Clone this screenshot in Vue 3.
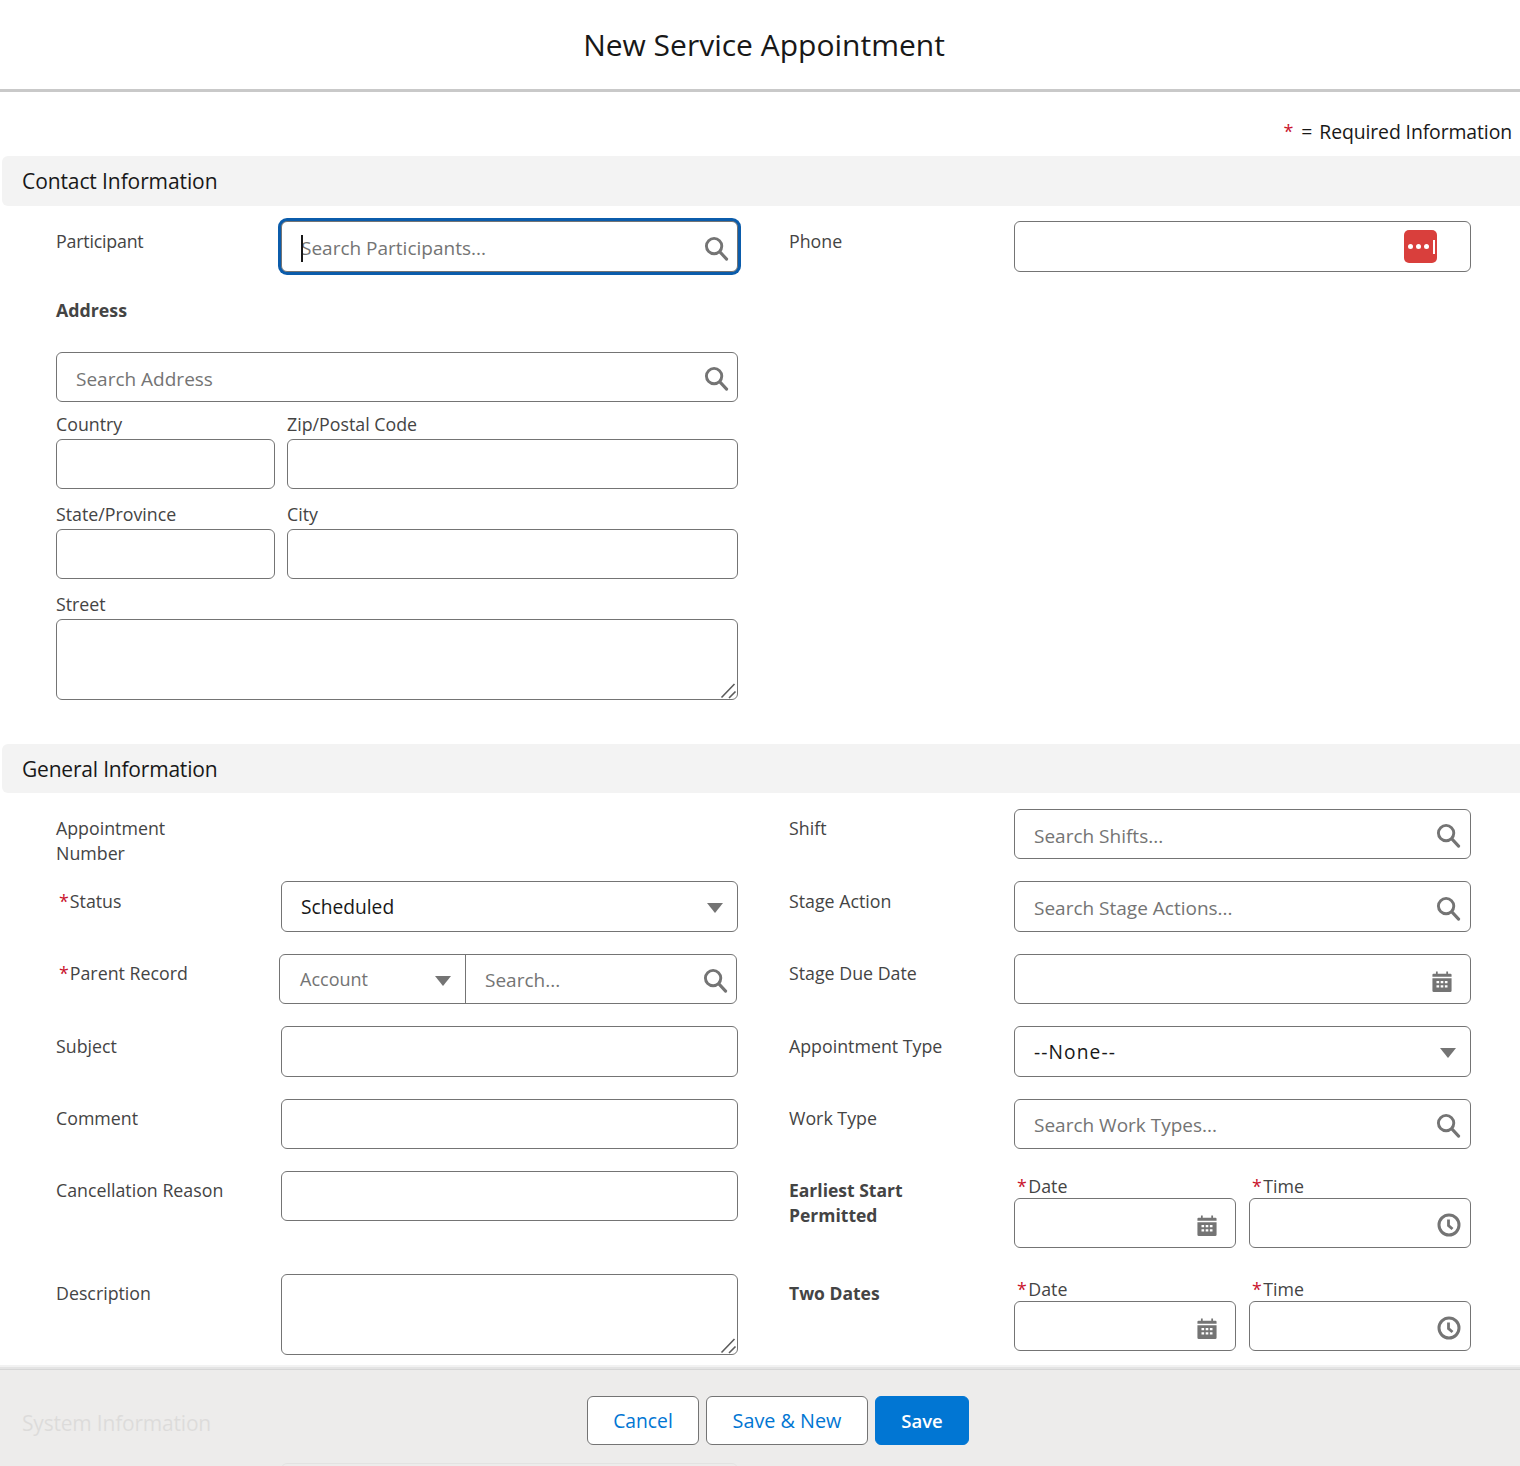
<template>
  <div class="page">
    <svg class="defs" width="0" height="0">
      <symbol id="i-search" viewBox="0 0 26 26">
        <circle cx="10.5" cy="10.5" r="8" fill="none" stroke="#747474" stroke-width="3" />
        <path d="M16.5 16.5 L23.5 24" fill="none" stroke="#747474" stroke-width="3.2" stroke-linecap="round" />
      </symbol>
      <symbol id="i-cal" viewBox="0 0 20 20">
        <path fill="#747474" fill-rule="evenodd" d="M4.5 0.5h1.6v2h7.8v-2h1.6v2h2.2a1 1 0 0 1 1 1v1.7H1.3V3.5a1 1 0 0 1 1-1h2.2zM1.3 6.6h17.4v11.4a1.2 1.2 0 0 1-1.2 1.2H2.5a1.2 1.2 0 0 1-1.2-1.2zM5 9.2v2h2.4v-2zM8.8 9.2v2h2.4v-2zM12.6 9.2v2H15v-2zM5 13v2h2.4v-2zM8.8 13v2h2.4v-2zM12.6 13v2H15v-2z" />
      </symbol>
      <symbol id="i-clock" viewBox="0 0 24 24">
        <circle cx="12" cy="12" r="10" fill="none" stroke="#747474" stroke-width="3" />
        <path d="M11.5 6.5 V12.5 L15.5 16" fill="none" stroke="#747474" stroke-width="2.8" />
      </symbol>
      <symbol id="i-grip" viewBox="0 0 18 16">
        <path d="M1.5 14.5 L14.5 1 M9 15 L15.5 8.5" fill="none" stroke="#5c5c5c" stroke-width="1.6" />
      </symbol>
    </svg>

    <header class="top">
      <h1>New Service Appointment</h1>
    </header>

    <p class="required"><span class="star">*</span><span class="eq">=</span>Required Information</p>

    <section>
      <h2 class="bar contact-bar">Contact Information</h2>
      <div class="grid contact-top">
        <div class="row">
          <label class="tight">Participant</label>
          <div class="box focus">
            <input placeholder="Search Participants..." />
            <i class="caret"></i>
            <svg class="ic search left-ic"><use href="#i-search" /></svg>
          </div>
        </div>
        <div class="row">
          <label>Phone</label>
          <div class="box">
            <input />
            <span class="lastpass"><b></b><b></b><b></b><em></em></span>
          </div>
        </div>
      </div>

      <div class="address">
        <h3>Address</h3>
        <div class="box h50">
          <input class="low" placeholder="Search Address" />
          <svg class="ic search left-ic"><use href="#i-search" /></svg>
        </div>
        <div class="addr-grid">
          <div class="addr-field">
            <label>Country</label>
            <div class="box h50"><input /></div>
          </div>
          <div class="addr-field">
            <label>Zip/Postal Code</label>
            <div class="box h50"><input /></div>
          </div>
          <div class="addr-field">
            <label>State/Province</label>
            <div class="box h50"><input /></div>
          </div>
          <div class="addr-field">
            <label>City</label>
            <div class="box h50"><input /></div>
          </div>
          <div class="addr-field wide">
            <label>Street</label>
            <div class="area-wrap">
              <textarea class="area"></textarea>
              <svg class="grip"><use href="#i-grip" /></svg>
            </div>
          </div>
        </div>
      </div>
    </section>

    <section class="general">
      <h2 class="bar general-bar">General Information</h2>
      <div class="grid general-grid">
        <div class="row"><label>Appointment<br />Number</label></div>
        <div class="row">
          <label>Shift</label>
          <div class="box"><input class="low" placeholder="Search Shifts..." /><svg class="ic search"><use href="#i-search" /></svg></div>
        </div>

        <div class="row tall">
          <label><span class="req">*</span>Status</label>
          <div class="box picker"><span class="val">Scheduled</span><i class="arrow"></i></div>
        </div>
        <div class="row tall">
          <label>Stage Action</label>
          <div class="box"><input placeholder="Search Stage Actions..." /><svg class="ic search"><use href="#i-search" /></svg></div>
        </div>

        <div class="row">
          <label><span class="req">*</span>Parent Record</label>
          <div class="box parent">
            <div class="parent-type"><span>Account</span><i class="arrow"></i></div>
            <div class="parent-search">
              <input placeholder="Search..." />
              <svg class="ic search left-ic"><use href="#i-search" /></svg>
            </div>
          </div>
        </div>
        <div class="row">
          <label>Stage Due Date</label>
          <div class="box"><input /><svg class="ic cal"><use href="#i-cal" /></svg></div>
        </div>

        <div class="row tall">
          <label>Subject</label>
          <div class="box"><input /></div>
        </div>
        <div class="row tall">
          <label>Appointment Type</label>
          <div class="box picker"><span class="val dashes">--None--</span><i class="arrow"></i></div>
        </div>

        <div class="row">
          <label>Comment</label>
          <div class="box"><input /></div>
        </div>
        <div class="row">
          <label>Work Type</label>
          <div class="box"><input placeholder="Search Work Types..." /><svg class="ic search"><use href="#i-search" /></svg></div>
        </div>

        <div class="row">
          <label>Cancellation Reason</label>
          <div class="box h50"><input /></div>
        </div>
        <div class="row">
          <label class="strong">Earliest Start<br />Permitted</label>
          <div class="datetime">
            <div class="dt">
              <span class="dt-label"><span class="req">*</span>Date</span>
              <div class="box h50"><input /><svg class="ic cal"><use href="#i-cal" /></svg></div>
            </div>
            <div class="dt">
              <span class="dt-label"><span class="req">*</span>Time</span>
              <div class="box h50"><input /><svg class="ic clock"><use href="#i-clock" /></svg></div>
            </div>
          </div>
        </div>

        <div class="row">
          <label>Description</label>
          <div class="area-wrap">
            <textarea class="area"></textarea>
            <svg class="grip"><use href="#i-grip" /></svg>
          </div>
        </div>
        <div class="row">
          <label class="strong">Two Dates</label>
          <div class="datetime">
            <div class="dt">
              <span class="dt-label"><span class="req">*</span>Date</span>
              <div class="box h50"><input /><svg class="ic cal"><use href="#i-cal" /></svg></div>
            </div>
            <div class="dt">
              <span class="dt-label"><span class="req">*</span>Time</span>
              <div class="box h50"><input /><svg class="ic clock"><use href="#i-clock" /></svg></div>
            </div>
          </div>
        </div>
      </div>
    </section>

    <section class="system">
      <h2 class="bar">System Information</h2>
      <div class="grid">
        <div class="row">
          <label></label>
          <div class="box"></div>
        </div>
      </div>
    </section>

    <footer class="foot">
      <button class="btn">Cancel</button>
      <button class="btn new">Save &amp; New</button>
      <button class="btn brand">Save</button>
    </footer>
  </div>
</template>

<script setup>
</script>

<style>
body {
  margin: 0;
  background: #fff;
  font-family: "Open Sans", "Noto Sans", sans-serif;
}
</style>

<style scoped>
.page {
  position: relative;
  width: 1520px;
  height: 1466px;
  overflow: hidden;
  color: #181818;
  font-size: 17.8px;
}

.defs {
  position: absolute;
}

.top {
  height: 89px;
  border-bottom: 3px solid #c9c9c9;
  display: flex;
  align-items: center;
  justify-content: center;
  padding-left: 8px;
  box-sizing: content-box;
}

h1 {
  margin: 0;
  font-size: 30px;
  font-weight: 400;
}

.required {
  margin: 0;
  height: 64px;
  box-sizing: border-box;
  padding: 14px 8px 0 0;
  display: flex;
  justify-content: flex-end;
  align-items: center;
  font-size: 19.4px;
  letter-spacing: -0.1px;
}

.star {
  color: #c9142d;
  margin-right: 8px;
  font-size: 18px;
}

.eq {
  margin-right: 7px;
}

.bar {
  margin: 0 0 0 2px;
  height: 50px;
  padding-left: 20px;
  display: flex;
  align-items: center;
  background: #f3f3f3;
  border-radius: 6px 0 0 6px;
  font-size: 21px;
  font-weight: 400;
  letter-spacing: -0.2px;
}

.contact-bar {
  letter-spacing: -0.1px;
}

.general-bar {
  height: 49px;
}

.grid {
  display: grid;
  grid-template-columns: 682px 682px;
  column-gap: 51px;
  padding-left: 56px;
}

.contact-top {
  padding-top: 15px;
  grid-template-rows: 51px;
}

.row {
  display: grid;
  grid-template-columns: 225px 457px;
  align-items: start;
}

.row label {
  padding-top: 8px;
  line-height: 25px;
  color: #444;
  white-space: nowrap;
}

.row label.tight {
  letter-spacing: -0.2px;
}

.general-grid .row label {
  padding-top: 7px;
}

.general-grid .row.tall label {
  padding-top: 8px;
}

.row label.strong {
  font-weight: 700;
  font-size: 17.5px;
}

.req {
  color: #c9142d;
  margin: 0 1px 0 3px;
}

.box {
  position: relative;
  box-sizing: border-box;
  height: 100%;
  border: 1px solid #747474;
  border-radius: 6px;
  background: #fff;
  display: flex;
  align-items: center;
}

.h50 {
  height: 50px;
}

.box input {
  width: 100%;
  height: 100%;
  box-sizing: border-box;
  border: 0;
  outline: 0;
  background: transparent;
  padding: 2px 60px 0 19px;
  font: inherit;
  font-size: 19px;
  color: #181818;
  border-radius: 6px;
}

.box input.low {
  padding-top: 4px;
}

.box input::placeholder {
  color: #747474;
  opacity: 1;
}

.focus {
  box-shadow: 0 0 0 3px #0b5cab;
}

.caret {
  position: absolute;
  left: 19px;
  top: 13px;
  width: 2px;
  height: 27px;
  background: #181818;
}

.ic {
  position: absolute;
}

.search {
  right: 9px;
  top: 50%;
  width: 25px;
  height: 25px;
  margin-top: -11px;
}

.left-ic {
  right: 8px;
}

.cal {
  right: 17px;
  top: 50%;
  width: 22px;
  height: 22px;
  margin-top: -8px;
}

.clock {
  right: 9px;
  top: 50%;
  width: 24px;
  height: 24px;
  margin-top: -10px;
}

.lastpass {
  position: absolute;
  right: 33px;
  top: 8px;
  width: 33px;
  height: 33px;
  box-sizing: border-box;
  padding-left: 4px;
  background: #d93f3c;
  border-radius: 5px;
  display: flex;
  align-items: center;
  gap: 3px;
}

.lastpass b {
  width: 5px;
  height: 5px;
  border-radius: 50%;
  background: #fff;
}

.lastpass em {
  width: 1.5px;
  height: 14px;
  background: #fff;
  margin-left: 1px;
}

.address {
  width: 682px;
  margin-left: 56px;
}

h3 {
  margin: 0;
  padding-top: 26px;
  height: 54px;
  line-height: 25px;
  font-size: 17.8px;
  font-weight: 700;
  color: #444;
}

.addr-grid {
  display: grid;
  grid-template-columns: 219px 451px;
  column-gap: 12px;
  row-gap: 0;
}

.addr-field {
  display: flex;
  flex-direction: column;
  padding-top: 10px;
  height: 77px;
  margin-bottom: 3px;
}

.addr-field label {
  height: 27px;
  line-height: 25px;
  color: #444;
}

.addr-field.wide {
  grid-column: 1 / 3;
  height: 108px;
  margin-bottom: 0;
}

.area-wrap {
  position: relative;
  height: 81px;
}

.area {
  display: block;
  box-sizing: border-box;
  width: 100%;
  height: 81px;
  border: 1px solid #747474;
  border-radius: 6px;
  outline: 0;
  background: #fff;
  resize: none;
  padding: 8px 19px;
  font: inherit;
}

.grip {
  position: absolute;
  right: 0;
  bottom: 1px;
  width: 18px;
  height: 16px;
}

.general {
  margin-top: 44px;
}

.general-grid {
  padding-top: 16px;
  grid-template-rows: 50px 51px 50px 51px 50px 81px 81px;
  row-gap: 22px;
}

.general-grid > .row {
  height: 100%;
}

.picker {
  padding-left: 19px;
  color: #181818;
  font-size: 19.2px;
}

.dashes {
  letter-spacing: 1.1px;
}

.arrow {
  position: absolute;
  right: 14px;
  top: 50%;
  margin-top: -4px;
  width: 0;
  height: 0;
  border-left: 8.5px solid transparent;
  border-right: 8.5px solid transparent;
  border-top: 10px solid #747474;
}

.parent {
  margin-left: -2px;
  width: 458px;
}

.parent-type {
  position: relative;
  width: 186px;
  height: 100%;
  box-sizing: border-box;
  padding-left: 20px;
  border-right: 1px solid #747474;
  display: flex;
  align-items: center;
  color: #747474;
  font-size: 18px;
}

.parent-type .arrow {
  margin-top: -3px;
}

.parent-search {
  position: relative;
  flex: 1;
  height: 100%;
}

.datetime {
  display: grid;
  grid-template-columns: 222px 222px;
  column-gap: 13px;
}

.dt-label {
  display: block;
  height: 27px;
  line-height: 30px;
  color: #444;
}

.dt-label .req {
  margin-right: 1.5px;
}

.system {
  margin-top: 43px;
}

.system .grid {
  padding-top: 15px;
}

.system .box {
  height: 50px;
}

.foot {
  position: absolute;
  left: 0;
  right: 0;
  bottom: 0;
  height: 96px;
  box-sizing: border-box;
  box-shadow: 0 -1px 0 #d6d6d6, 0 -3px 0 #e4e4e4, 0 -5px 0 #f2f2f2;
  background: rgba(236, 235, 234, 0.93);
  padding: 26px 0 0 587px;
  display: flex;
  align-items: flex-start;
  gap: 7px;
}

.btn {
  height: 49px;
  width: 112px;
  box-sizing: border-box;
  border: 1px solid #747474;
  border-radius: 6px;
  background: #fff;
  color: #0176d3;
  font: inherit;
  font-size: 19.3px;
  padding: 0;
}

.btn.new {
  width: 162px;
  font-size: 19.8px;
}

.btn.brand {
  width: 94px;
  background: #0176d3;
  border-color: #0176d3;
  color: #fff;
  font-size: 18.5px;
  font-weight: 600;
}
</style>
